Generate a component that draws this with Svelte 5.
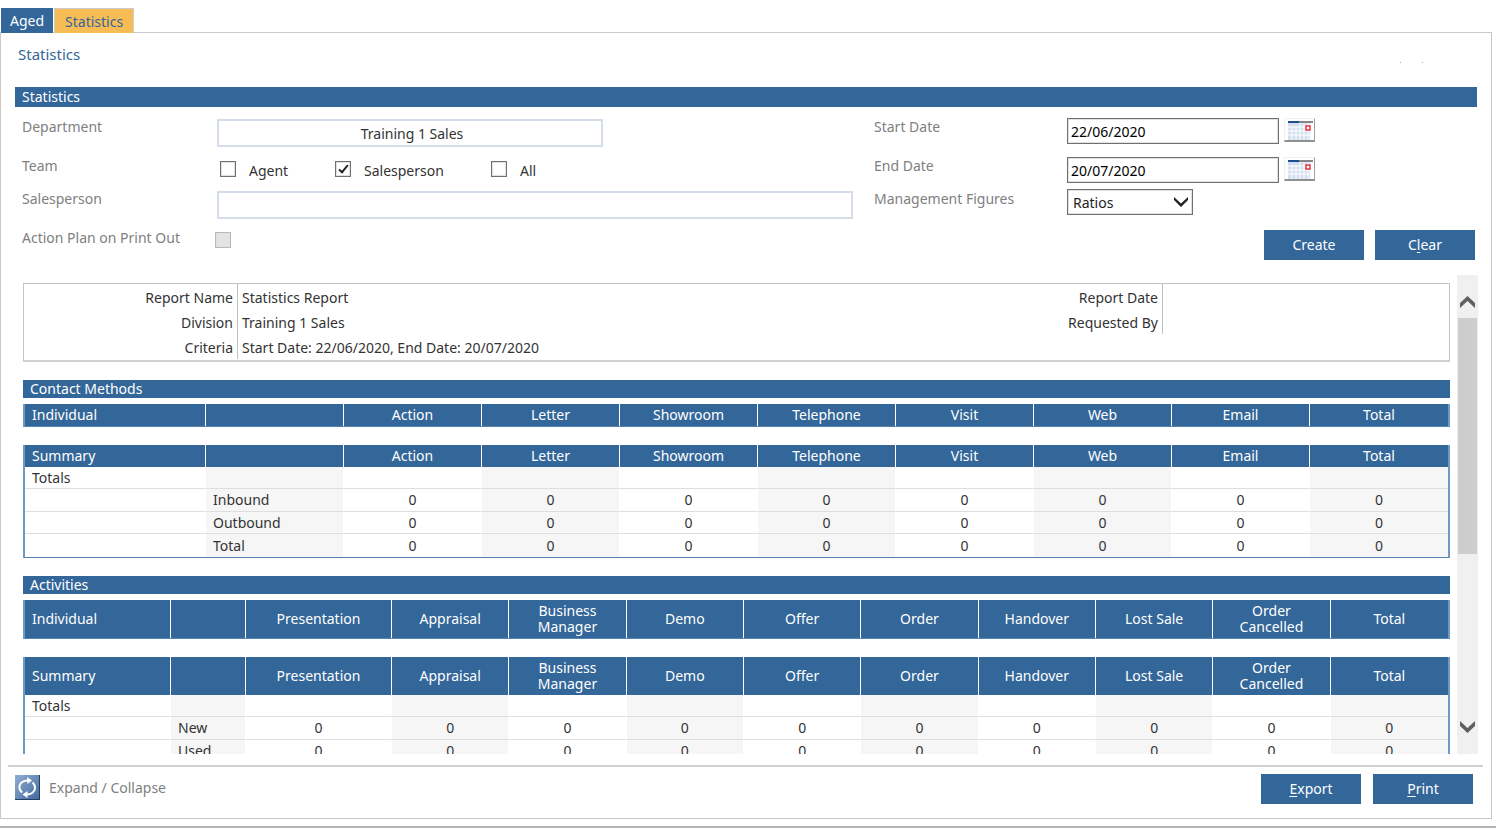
<script lang="ts">
  type Section = {
    title: string;
    kind: string;
    columns: string[];
    rows: string[];
  };

  const tabs = ["Aged", "Statistics"];
  const sections: Section[] = [
    {
      title: "Contact Methods",
      kind: "contact",
      columns: ["Action", "Letter", "Showroom", "Telephone", "Visit", "Web", "Email", "Total"],
      rows: ["Inbound", "Outbound", "Total"],
    },
    {
      title: "Activities",
      kind: "activities",
      columns: [
        "Presentation",
        "Appraisal",
        "Business Manager",
        "Demo",
        "Offer",
        "Order",
        "Handover",
        "Lost Sale",
        "Order Cancelled",
        "Total",
      ],
      rows: ["New", "Used"],
    },
  ];

  let activeTab = $state("Statistics");
  let department = $state("Training 1 Sales");
  let salesperson = $state("");
  let team = $state({ agent: false, salesperson: true, all: false });
  let startDate = $state("22/06/2020");
  let endDate = $state("20/07/2020");
  let figures = $state("Ratios");
</script>

{#snippet calendar()}
  <svg width="25" height="19" viewBox="0 0 25 19" aria-hidden="true">
    <rect width="22" height="19" fill="#d3def0" />
    <path d="M0 6H10M0 10H22M0 14H22M4 5V19M8 5V19M12 2V19M16 2V19M20 2V19M10 6H22" stroke="#fff" stroke-width="1" />
    <rect width="11" height="2" fill="#1c4f8f" />
    <rect x="11" width="14" height="2" fill="#858585" />
    <rect x="18" y="5" width="4" height="4" fill="#fff" stroke="#e8343c" stroke-width="1.5" />
  </svg>
{/snippet}

{#snippet headRow(first: string, columns: string[])}
  <thead>
    <tr>
      <th class="left" scope="col">{first}</th>
      <td></td>
      {#each columns as column}
        <th scope="col">{column}</th>
      {/each}
    </tr>
  </thead>
{/snippet}

<div class="page">
  <nav class="tabs">
    {#each tabs as tab}
      <button class="tab" class:active={tab === activeTab} onclick={() => (activeTab = tab)}>{tab}</button>
    {/each}
  </nav>

  <main class="panel">
    <header class="title-row">
      <h1>Statistics</h1>
      <div class="marks"><span></span><span></span></div>
    </header>

    <h2 class="bar">Statistics</h2>

    <form class="filters" onsubmit={(e) => e.preventDefault()}>
      <label for="department">Department</label>
      <div><input id="department" class="box department" type="text" bind:value={department} /></div>
      <label for="start">Start Date</label>
      <div class="date">
        <input id="start" type="text" bind:value={startDate} />
        <button type="button" class="picker" aria-label="Pick start date">{@render calendar()}</button>
      </div>

      <span class="caption">Team</span>
      <div class="team">
        <label class="check agent"><input type="checkbox" bind:checked={team.agent} />Agent</label>
        <label class="check person"><input type="checkbox" bind:checked={team.salesperson} />Salesperson</label>
        <label class="check"><input type="checkbox" bind:checked={team.all} />All</label>
      </div>
      <label for="end">End Date</label>
      <div class="date">
        <input id="end" type="text" bind:value={endDate} />
        <button type="button" class="picker" aria-label="Pick end date">{@render calendar()}</button>
      </div>

      <label for="salesperson">Salesperson</label>
      <div><input id="salesperson" class="box salesperson" type="text" bind:value={salesperson} /></div>
      <label for="figures">Management Figures</label>
      <div class="select">
        <select id="figures" bind:value={figures}>
          <option>Ratios</option>
          <option>Totals</option>
        </select>
        <svg width="14" height="10" viewBox="0 0 14 10" aria-hidden="true">
          <path d="M0 0L7 6.500L14 0V3L7 10L0 3Z" fill="#222" />
        </svg>
      </div>

      <label for="action-plan">Action Plan on Print Out</label>
      <div class="plan"><input id="action-plan" type="checkbox" disabled /></div>
      <div class="actions">
        <button type="submit" class="btn">Create</button>
        <button type="button" class="btn">C<u>l</u>ear</button>
      </div>
    </form>

    <div class="viewer">
      <div class="report">
        <div class="summary">
          <dl>
            <dt>Report Name</dt>
            <dd>Statistics Report</dd>
            <dt>Division</dt>
            <dd>Training 1 Sales</dd>
            <dt>Criteria</dt>
            <dd>Start Date: 22/06/2020, End Date: 20/07/2020</dd>
          </dl>
          <dl>
            <dt>Report Date</dt>
            <dd></dd>
            <dt>Requested By</dt>
            <dd></dd>
          </dl>
        </div>

        {#each sections as section}
          <section>
            <h3>{section.title}</h3>
            <table class={section.kind}>
              {@render headRow("Individual", section.columns)}
            </table>
            <table class={section.kind}>
              {@render headRow("Summary", section.columns)}
              <tbody>
                <tr>
                  <th class="left" scope="row">Totals</th>
                  <td></td>
                  {#each section.columns as _}
                    <td></td>
                  {/each}
                </tr>
                {#each section.rows as row}
                  <tr>
                    <td></td>
                    <th class="left" scope="row">{row}</th>
                    {#each section.columns as _}
                      <td>0</td>
                    {/each}
                  </tr>
                {/each}
              </tbody>
            </table>
          </section>
        {/each}
      </div>

      <div class="scrollbar">
        <button aria-label="Scroll up">
          <svg width="15" height="12" viewBox="0 0 15 12" aria-hidden="true">
            <path d="M7.5 0L15 7V12L7.5 5L0 12V7Z" fill="#606060" />
          </svg>
        </button>
        <div class="track"><div class="thumb"></div></div>
        <button class="down" aria-label="Scroll down">
          <svg width="15" height="12" viewBox="0 0 15 12" aria-hidden="true">
            <path d="M7.5 12L15 5V0L7.5 7L0 0V5Z" fill="#606060" />
          </svg>
        </button>
      </div>
    </div>

    <footer>
      <button class="toggle">
        <svg width="25" height="25" viewBox="0 0 25 25" aria-hidden="true">
          <defs>
            <linearGradient id="tile" x1="0" y1="0" x2="1" y2="1">
              <stop offset="0" stop-color="#8fb0d4" />
              <stop offset="1" stop-color="#44699c" />
            </linearGradient>
          </defs>
          <rect width="25" height="25" fill="#1f3d66" />
          <rect width="24" height="24" fill="url(#tile)" />
          <g fill="none" stroke="#fff" stroke-width="2">
            <path d="M7 17.500C2.500 13 3.500 6 13 5.500" />
            <path d="M17.500 7.500C22 12 20.500 19 11.500 19.500" />
          </g>
          <path d="M12 2L17 5.500L12.500 9ZM12.500 16L7.500 19.500L12.500 23Z" fill="#fff" />
        </svg>
        Expand / Collapse
      </button>
      <div class="footer-actions">
        <button class="btn"><u>E</u>xport</button>
        <button class="btn"><u>P</u>rint</button>
      </div>
    </footer>
  </main>
</div>

<style>
  :global(body) {
    background: #fff;
  }
  .page {
    box-sizing: border-box;
    height: 100vh;
    min-height: 600px;
    display: flex;
    flex-direction: column;
    padding: 8px 0 0;
    border-bottom: 2px solid #b4b4b4;
    font-family: "Noto Sans", Tahoma, sans-serif;
    font-size: 14px;
    line-height: 18px;
    color: #333;
  }
  button,
  input,
  select {
    box-sizing: border-box;
    margin: 0;
    font: inherit;
    color: inherit;
    border-radius: 0;
  }
  h1,
  h2,
  h3,
  dl,
  dd {
    margin: 0;
    font-weight: normal;
  }

  .tabs {
    position: relative;
    z-index: 1;
    display: flex;
    gap: 1px;
    height: 25px;
    padding-left: 1px;
  }
  .tab {
    border: none;
    padding: 0 9px;
    background: #336699;
    color: #fff;
  }
  .tab.active {
    border: 1px solid #ccc;
    border-bottom: none;
    padding: 1px 10px 0;
    background: #f8bc55;
    color: #336699;
  }

  .panel {
    flex: 1;
    min-height: 0;
    display: flex;
    flex-direction: column;
    margin: -1px 4px 7px 0;
    border: 1px solid #c8c8c8;
    padding: 0 8px 0 7px;
  }
  .title-row {
    display: flex;
    justify-content: space-between;
    align-items: center;
    height: 42px;
    padding: 0 60px 12px 10px;
    color: #336699;
  }
  .title-row h1 {
    font-size: 15px;
  }
  .marks {
    display: flex;
    gap: 21px;
    padding-top: 16px;
  }
  .marks span {
    width: 1px;
    height: 1px;
    background: #aaa;
  }
  .bar {
    margin: 0 6px 0 7px;
    padding: 1px 7px;
    background: #336699;
    color: #fff;
    font-size: 14px;
  }

  .filters {
    display: grid;
    grid-template-columns: 202px 657fr 193px 410fr;
    grid-template-rows: 39px 33px 39px 31px;
    padding: 11px 6px 0 7px;
    color: #808080;
  }
  .filters > label,
  .caption {
    align-self: start;
    padding-left: 7px;
  }
  .filters label[for="start"],
  .filters label[for="end"],
  .filters label[for="figures"] {
    padding-left: 0;
  }
  .box {
    display: block;
    height: 28px;
    margin-top: 1px;
    border: 2px solid #d5dde8;
    background: #fff;
    color: #333;
  }
  .department {
    width: 386px;
    padding: 0 0 0 4px;
    text-align: center;
  }
  .salesperson {
    width: calc(100% - 21px);
  }
  .date {
    display: flex;
    gap: 5px;
  }
  .date input {
    width: 212px;
    height: 26px;
    border: 1px solid #707070;
    outline: 1px solid #e0e0e0;
    outline-offset: -2px;
    padding: 1px 3px 0;
    color: #000;
  }
  .picker {
    width: 31px;
    height: 24px;
    border: 1px solid #f0f0f0;
    border-right-color: #a0a0a0;
    border-bottom: 2px solid #909090;
    padding: 1px 0 0 1px;
    background: #fff;
    line-height: 0;
  }
  .team {
    display: flex;
    padding: 4px 0 0 3px;
    height: 20px;
  }
  .check {
    display: flex;
    gap: 13px;
    line-height: 19px;
    color: #333;
  }
  .agent {
    width: 115px;
  }
  .person {
    width: 156px;
  }
  input[type="checkbox"] {
    appearance: none;
    width: 16px;
    height: 16px;
    border: 1px solid #707070;
    outline: 1px solid #e0e0e0;
    outline-offset: -2px;
    background: #fff;
  }
  input[type="checkbox"]:checked {
    position: relative;
  }
  input[type="checkbox"]:checked::after {
    content: "";
    position: absolute;
    left: 5px;
    top: 1px;
    width: 3px;
    height: 8px;
    border: solid #222;
    border-width: 0 2px 2px 0;
    transform: rotate(40deg);
  }
  input[type="checkbox"]:disabled {
    display: block;
    border-color: #b8b8b8;
    background: #e4e4e4;
  }
  .plan {
    padding-top: 3px;
  }
  .plan input {
    margin-left: -2px;
  }
  .select {
    position: relative;
    width: 126px;
    height: 26px;
    margin-top: -1px;
    color: #222;
  }
  .select select {
    appearance: none;
    width: 100%;
    height: 26px;
    border: 1px solid #707070;
    outline: 1px solid #e0e0e0;
    outline-offset: -2px;
    padding: 1px 5px 0;
    background: #fff;
  }
  .select svg {
    position: absolute;
    right: 5px;
    top: 8px;
    pointer-events: none;
  }
  .actions {
    grid-column: 3 / 5;
    display: flex;
    justify-content: flex-end;
    gap: 11px;
    padding: 1px 2px 0 0;
  }
  .btn {
    width: 100px;
    height: 30px;
    border: none;
    padding: 0;
    background: #336699;
    color: #fff;
  }
  .btn u {
    text-underline-offset: 2px;
  }

  .viewer {
    flex: 1;
    min-height: 0;
    display: flex;
    gap: 7px;
    margin: 15px 5px 11px 15px;
  }
  .report {
    flex: 1;
    overflow: hidden;
    padding-top: 8px;
  }
  .summary {
    box-sizing: border-box;
    display: grid;
    grid-template-columns: 925fr 500fr;
    height: 79px;
    border: 1px solid #c4c4c4;
    border-bottom: 2px solid #d0d0d0;
  }
  dl {
    display: grid;
    grid-template-columns: 214px 1fr;
    grid-auto-rows: 25px;
    align-content: start;
    line-height: 28px;
  }
  dt {
    border-right: 1px solid #c0c0c0;
    padding-right: 4px;
    text-align: right;
  }
  dd {
    padding-left: 4px;
  }
  section {
    margin-top: 18px;
  }
  h3 {
    margin-bottom: 6px;
    padding-left: 7px;
    background: #336699;
    color: #fff;
    font-size: 14px;
  }
  table {
    width: 100%;
    table-layout: fixed;
    border-collapse: separate;
    border-spacing: 0;
    border: 2px solid #7299c2;
    border-top: none;
    border-bottom: 1px solid #5583b5;
  }
  table + table {
    margin-top: 18px;
  }
  th,
  td {
    box-sizing: border-box;
    height: 22px;
    padding: 0;
    font-weight: normal;
    text-align: center;
    line-height: 16px;
  }
  th.left {
    padding-left: 7px;
    text-align: left;
  }
  thead th,
  thead td {
    border-right: 1px solid #fff;
    background: #336699;
    color: #fff;
  }
  thead th:last-child {
    border-right: none;
  }
  .activities thead th {
    height: 38px;
    padding-right: 20px;
    padding-left: 20px;
  }
  .activities thead th.left {
    padding-left: 7px;
  }
  .contact th:first-child,
  .contact td:first-child {
    width: 181px;
  }
  .activities th:first-child,
  .activities td:first-child {
    width: 146px;
  }
  .activities tr > :nth-child(2) {
    width: 75px;
  }
  .activities tr > :nth-child(3) {
    width: 146px;
  }
  tbody tr > * {
    border-right: 1px solid #fff;
    border-bottom: 1px solid #dedede;
  }
  tbody tr > :last-child {
    border-right: none;
  }
  .contact tbody tr:last-child > * {
    border-bottom: none;
  }
  tbody tr:nth-child(even) > * {
    height: 23px;
  }
  tbody tr > :nth-child(even) {
    background: #f6f6f6;
  }

  .scrollbar {
    width: 21px;
    display: flex;
    flex-direction: column;
    background: #f0f0f0;
  }
  .scrollbar button {
    height: 43px;
    border: none;
    padding: 11px 0 0;
    background: none;
    line-height: 0;
  }
  .scrollbar .down {
    padding: 0 0 11px;
  }
  .track {
    flex: 1;
    padding: 0 1px;
  }
  .thumb {
    height: 60%;
    background: #cdcdcd;
  }

  footer {
    display: flex;
    justify-content: space-between;
    align-items: flex-start;
    height: 44px;
    border-top: 2px solid #d0d0d0;
    padding: 7px 10px 0 7px;
  }
  .toggle {
    display: flex;
    align-items: center;
    gap: 9px;
    border: none;
    padding: 1px 0 0;
    background: none;
    color: #808080;
  }
  .footer-actions {
    display: flex;
    gap: 12px;
  }
</style>
